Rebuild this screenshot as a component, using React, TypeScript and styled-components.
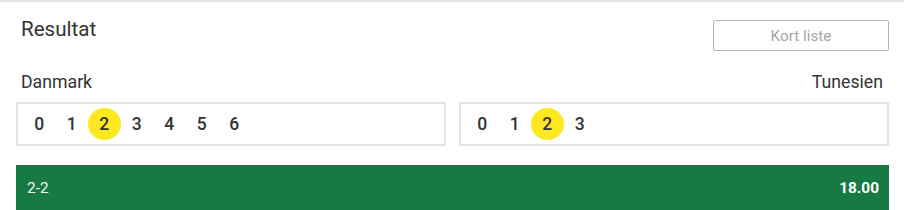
import React from 'react';
import styled, { createGlobalStyle } from 'styled-components';

type TeamScore = {
  name: string;
  goals: number[];
  selected: number;
};

const teams: TeamScore[] = [
  { name: 'Danmark', goals: [0, 1, 2, 3, 4, 5, 6], selected: 2 },
  { name: 'Tunesien', goals: [0, 1, 2, 3], selected: 2 },
];

const GlobalStyle = createGlobalStyle`
  body {
    margin: 0;
    background: #fff;
    font-family: Roboto, "Liberation Sans", Arial, sans-serif;
    color: #333;
  }
`;

const App = () => {
  const [home, away] = teams;

  return (
    <>
      <GlobalStyle />
      <Wrap>
        <Header>
          <Title>Resultat</Title>
          <ShortListButton type="button">Kort liste</ShortListButton>
        </Header>
        <Labels>
          <TeamName>{home.name}</TeamName>
          <TeamName alignRight>{away.name}</TeamName>
        </Labels>
        <Boxes>
          {teams.map((team) => (
            <GoalBox key={team.name}>
              {team.goals.map((g) => (
                <Goal key={g} isSelected={g === team.selected}>
                  {g}
                </Goal>
              ))}
            </GoalBox>
          ))}
        </Boxes>
        <OddsBar>
          <Score>{`${home.selected}-${away.selected}`}</Score>
          <Odds>18.00</Odds>
        </OddsBar>
      </Wrap>
    </>
  );
};

const Wrap = styled.div`
  border-top: 2px solid #e4e4e4;
  padding: 0 15px 0 16px;
`;

const Header = styled.div`
  display: flex;
  justify-content: space-between;
  align-items: flex-start;
  padding-top: 18px;
`;

const Title = styled.h2`
  margin: 0 0 0 5px;
  font-size: 20.6px;
  font-weight: 400;
  line-height: 18px;
  color: #333;
`;

const ShortListButton = styled.button`
  width: 176px;
  height: 31px;
  padding: 0;
  border: 1px solid #b5b5b5;
  border-radius: 2px;
  background: #fff;
  font-family: inherit;
  font-size: 15.3px;
  color: #a6a6a6;
  cursor: pointer;
`;

const Labels = styled.div`
  display: flex;
  justify-content: space-between;
  padding: 0 6px 0 5px;
  margin-top: 21px;
`;

const TeamName = styled.span<{ alignRight?: boolean }>`
  font-size: 17.7px;
  line-height: 20px;
  color: #333;
  text-align: ${({ alignRight }) => (alignRight ? 'right' : 'left')};
`;

const Boxes = styled.div`
  display: grid;
  grid-template-columns: 1fr 1fr;
  gap: 13px;
  margin-top: 10px;
`;

const GoalBox = styled.div`
  display: flex;
  align-items: center;
  height: 44px;
  box-sizing: border-box;
  padding-left: 5px;
  border: 2px solid #e2e2e2;
  background: #fff;
`;

const Goal = styled.span<{ isSelected: boolean }>`
  display: flex;
  align-items: center;
  justify-content: center;
  width: 32.5px;
  height: 32px;
  border-radius: 50%;
  font-size: 17.5px;
  font-weight: 500;
  color: #333;
  background: ${({ isSelected }) => (isSelected ? '#ffe81f' : 'transparent')};
  cursor: pointer;
`;

const OddsBar = styled.div`
  display: flex;
  justify-content: space-between;
  align-items: flex-start;
  height: 50px;
  box-sizing: border-box;
  margin-top: 19px;
  padding: 15px 10px 0 11px;
  background: #177a45;
  color: #fff;
  font-size: 15.4px;
  line-height: 16px;
`;

const Score = styled.span`
  font-weight: 400;
  color: #eef5f0;
`;

const Odds = styled.span`
  font-weight: 700;
`;

export default App;
